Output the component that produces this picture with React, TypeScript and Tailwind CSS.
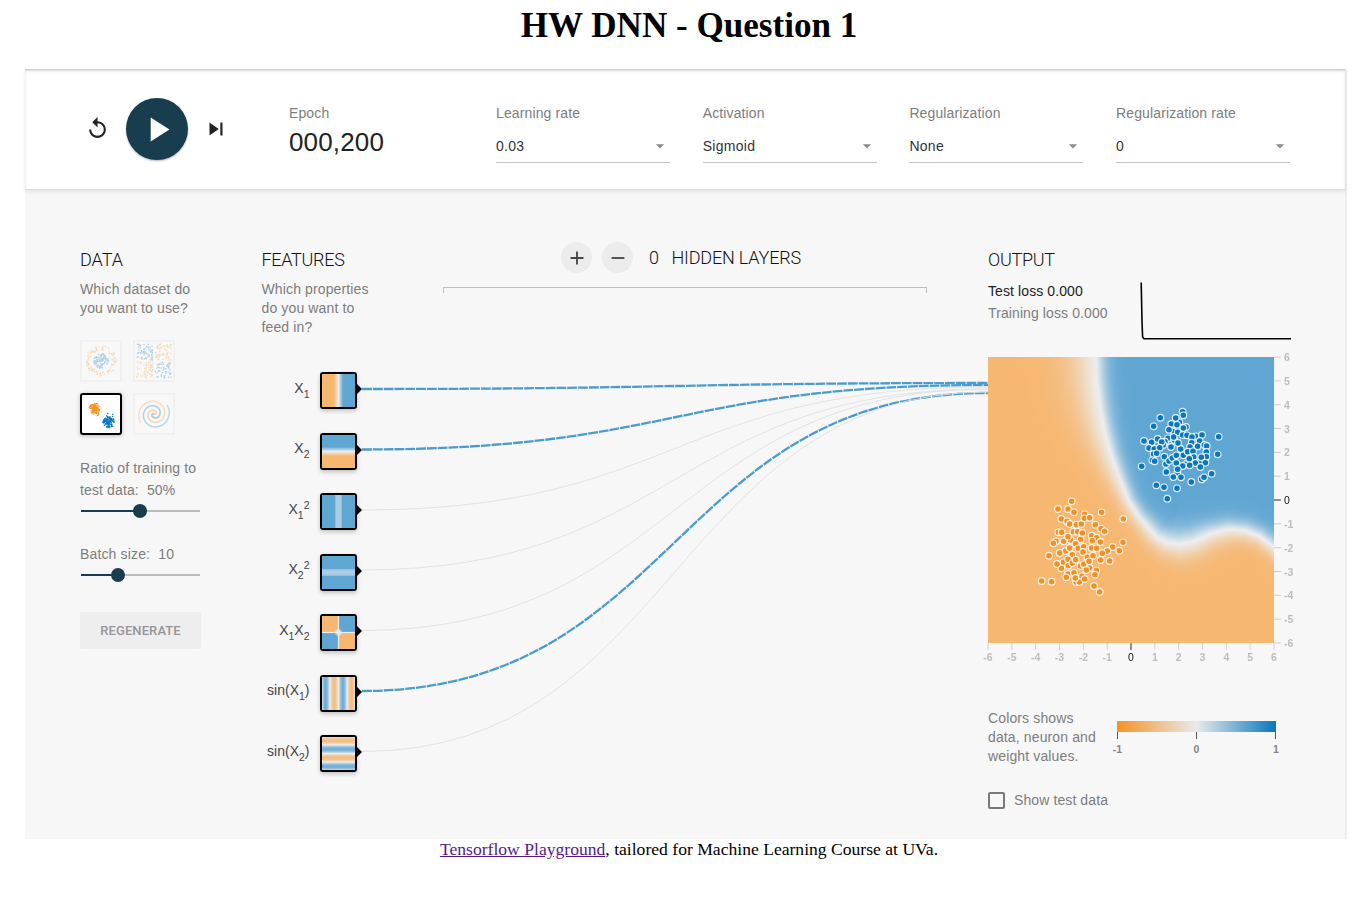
import React, { useLayoutEffect, useRef } from "react";
import {
  MdReplay,
  MdPlayArrow,
  MdSkipNext,
  MdArrowDropDown,
  MdAdd,
  MdRemove,
} from "react-icons/md";

type Field = (x: number, y: number) => number;

const ORANGE = [246, 183, 113];
const MID = [236, 237, 238];
const BLUE = [96, 166, 211];

function Heat({ field, size, className }: { field: Field; size: number; className: string }) {
  const ref = useRef<HTMLCanvasElement>(null);
  useLayoutEffect(() => {
    const ctx = ref.current?.getContext("2d");
    if (!ctx) return;
    const img = ctx.createImageData(size, size);
    for (let j = 0; j < size; j++) {
      for (let i = 0; i < size; i++) {
        const x = ((i + 0.5) / size) * 12 - 6;
        const y = 6 - ((j + 0.5) / size) * 12;
        const v = Math.max(-1, Math.min(1, field(x, y)));
        const end = v < 0 ? ORANGE : BLUE;
        const t = Math.abs(v);
        const k = (j * size + i) * 4;
        for (let c = 0; c < 3; c++) img.data[k + c] = MID[c] + (end[c] - MID[c]) * t;
        img.data[k + 3] = 255;
      }
    }
    ctx.putImageData(img, 0, 0);
  }, [field, size]);
  return <canvas ref={ref} width={size} height={size} className={className} />;
}

// Decision boundary: x, y, falloff on the negative side, falloff on the positive side
const BOUNDARY = [
  [-1.48, 7, 1.35, 0.55],
  [-1.48, 6, 1.3, 0.55],
  [-1.42, 5, 1.25, 0.55],
  [-1.31, 4, 1.15, 0.55],
  [-1.12, 3, 1.0, 0.53],
  [-0.86, 2, 0.8, 0.5],
  [-0.54, 1.1, 0.65, 0.47],
  [-0.1, 0, 0.5, 0.44],
  [0.32, -0.68, 0.47, 0.48],
  [1.05, -1.52, 0.55, 0.62],
  [1.5, -1.77, 0.66, 0.75],
  [2.05, -1.86, 0.76, 0.8],
  [2.6, -1.74, 0.76, 0.75],
  [3.3, -1.42, 0.68, 0.62],
  [4.1, -1.22, 0.62, 0.54],
  [4.8, -1.28, 0.55, 0.5],
  [5.4, -1.52, 0.48, 0.48],
  [6, -1.98, 0.45, 0.48],
  [6.6, -2.6, 0.45, 0.48],
];

const outputField: Field = (x, y) => {
  let best = Infinity;
  let value = 0;
  for (let i = 0; i < BOUNDARY.length - 1; i++) {
    const [ax, ay, an, ap] = BOUNDARY[i];
    const [bx, by, bn, bp] = BOUNDARY[i + 1];
    const dx = bx - ax;
    const dy = by - ay;
    const t = Math.max(0, Math.min(1, ((x - ax) * dx + (y - ay) * dy) / (dx * dx + dy * dy)));
    const ex = x - ax - t * dx;
    const ey = y - ay - t * dy;
    const d = Math.hypot(ex, ey);
    if (d < best) {
      best = d;
      const positive = dx * ey - dy * ex > 0;
      const w = positive ? ap + (bp - ap) * t : an + (bn - an) * t;
      value = (positive ? 1 : -1) * Math.tanh(Math.pow(d / w, 1.15));
    }
  }
  return value;
};

const BLUE_POINTS = "208,97 191,125 174,145 165,155 212,177 160,165 230,222 270,215 193,150 218,65 220,76 151,83 197,84 131,109 184,102 201,104 177,119 228,111 220,114 203,127 102,153 125,157 143,147 155,156 117,174 133,177 149,173 131,192 140,190 127,211 134,214 95,229 168,222 163,200 177,213 187,204 199,196 199,219 220,196 183,171 191,141 204,159 218,135 231,136 257,139 246,141 276,135 326,140 245,158 269,153 263,169 283,165 290,168 240,171 233,185 249,184 289,186 323,193 251,201 289,200 274,202 238,206 256,219 286,218 239,226 218,228 271,231 202,249 203,238 169,246 190,261 213,262 244,276 275,268 282,262 305,251 139,286 162,292 201,295 172,326";
const ORANGE_POINTS = "160,155 182,178 155,64 114,87 144,87 162,97 194,103 245,97 310,117 124,117 141,124 149,132 169,134 184,132 193,115 209,113 226,134 243,146 254,154 115,157 125,157 173,155 187,159 215,167 230,173 241,186 309,187 131,184 152,180 144,170 108,184 100,190 167,191 175,205 191,200 137,213 149,204 217,182 215,204 230,205 278,201 298,212 262,213 247,220 119,219 87,227 189,216 157,224 202,232 219,227 242,240 269,243 130,247 124,265 111,252 144,238 145,257 157,249 167,239 181,258 191,253 207,244 209,264 199,270 229,271 225,284 144,282 162,278 139,292 186,289 168,306 178,306 166,294 194,297 65,303 95,305 222,318 239,336";

function Points({ list, fill, transform }: { list: string; fill: string; transform: string }) {
  return (
    <g transform={transform} fill={fill} stroke="#fff" strokeOpacity={0.85} strokeWidth={3.4}>
      {list.split(" ").map((p) => {
        const [x, y] = p.split(",");
        return <circle key={p} cx={x} cy={y} r={10} />;
      })}
    </g>
  );
}

const TICKS = [-6, -5, -4, -3, -2, -1, 0, 1, 2, 3, 4, 5, 6];

function OutputPlot() {
  return (
    <div className="relative mt-[17px] h-[310px] w-[310px]">
      <Heat field={outputField} size={286} className="block h-[286px] w-[286px]" />
      <svg width="320" height="316" className="absolute left-0 top-0 overflow-visible">
        <Points list={BLUE_POINTS} fill="#0877bd" transform="translate(122 33) scale(.33333)" />
        <Points list={ORANGE_POINTS} fill="#ee9127" transform="translate(32 123) scale(.33333)" />
        {TICKS.map((t) => {
          const p = (t + 6) * 23.83;
          const zero = t === 0;
          return (
            <g
              key={t}
              fontFamily="Liberation Sans, sans-serif"
              fontSize={10.5}
              fontWeight={zero ? 400 : 700}
              fill={zero ? "#111" : "#bdbdbd"}
              stroke="none"
            >
              <line x1={p} x2={p} y1={286} y2={293} stroke={zero ? "#777" : "#cfcfcf"} strokeWidth={zero ? 1.6 : 1} />
              <text x={p} y={304} textAnchor="middle">{t}</text>
              <line x1={286} x2={293} y1={286 - p} y2={286 - p} stroke={zero ? "#777" : "#cfcfcf"} strokeWidth={zero ? 1.6 : 1} />
              <text x={296} y={290 - p}>{t}</text>
            </g>
          );
        })}
      </svg>
    </div>
  );
}

const Sub = ({ children }: { children: string }) => (
  <span className="relative top-[5px] text-[10.5px]">{children}</span>
);
const Sup = ({ children }: { children: string }) => (
  <span className="relative -top-[5px] text-[10.5px]">{children}</span>
);

const FEATURES: { label: React.ReactNode; field: Field; from: number; to: number; on: boolean }[] = [
  { label: <>X<Sub>1</Sub></>, field: (x) => x * 0.6, from: 389, to: 383, on: true },
  { label: <>X<Sub>2</Sub></>, field: (_x, y) => y * 0.6, from: 449.5, to: 385, on: true },
  { label: <>X<Sub>1</Sub><Sup>2</Sup></>, field: (x) => 0.45 + Math.pow(x / 1.4, 4) * 0.5, from: 510, to: 387, on: false },
  { label: <>X<Sub>2</Sub><Sup>2</Sup></>, field: (_x, y) => 0.45 + Math.pow(y / 1.4, 4) * 0.5, from: 570, to: 389, on: false },
  {
    label: <>X<Sub>1</Sub>X<Sub>2</Sub></>,
    field: (x, y) => Math.tanh(x * 4) * Math.tanh(y * 4) * Math.min(1, Math.pow(Math.hypot(x, y) / 1.5, 2)),
    from: 630.5,
    to: 389,
    on: false,
  },
  { label: <>sin(X<Sub>1</Sub>)</>, field: (x) => Math.sin(x) * 0.88, from: 691, to: 393, on: true },
  { label: <>sin(X<Sub>2</Sub>)</>, field: (_x, y) => Math.sin(y) * 0.88, from: 751.5, to: 392, on: false },
];

function Links() {
  return (
    <svg width="630" height="400" className="pointer-events-none absolute left-[337px] top-[301px] overflow-visible">
      <g transform="translate(-362 -370)" fill="none">
        {FEATURES.map((f) => (
          <path
            key={f.from}
            d={`M362,${f.from}C675,${f.from} 675,${f.to} 988,${f.to}`}
            stroke={f.on ? "#4b9bcc" : "#e0e0e0"}
            strokeWidth={f.on ? 2.3 : 0.9}
            strokeDasharray={f.on ? "9.8 1" : undefined}
          />
        ))}
      </g>
    </svg>
  );
}

function randomSource(seed: number) {
  let s = seed;
  return () => {
    s = (s * 16807) % 2147483647;
    return s / 2147483647;
  };
}

type Dot = [number, number, boolean];

function makeDots(kind: string): Dot[] {
  const r = randomSource(91);
  const dots: Dot[] = [];
  const norm = () => r() + r() + r() - 1.5;
  if (kind === "circle") {
    for (let i = 0; i < 95; i++) {
      const a = r() * 6.283;
      const d = Math.sqrt(r()) * 7.5;
      dots.push([21 + d * Math.cos(a), 21 + d * Math.sin(a), true]);
    }
    for (let i = 0; i < 95; i++) {
      const a = r() * 6.283;
      const d = 11 + r() * 4.5;
      dots.push([21 + d * Math.cos(a), 21 + d * Math.sin(a), false]);
    }
  } else if (kind === "xor") {
    // Blue fills the top-left and bottom-right quadrants
    for (let i = 0; i < 230; i++) {
      const x = r() * 32 - 16;
      const y = r() * 32 - 16;
      dots.push([21 + x + Math.sign(x), 21 + y + Math.sign(y), x * y > 0]);
    }
  } else if (kind === "gauss") {
    for (let i = 0; i < 110; i++) {
      dots.push([15 + norm() * 5, 15.6 + norm() * 5.6, false]);
      dots.push([28.5 + norm() * 5.4, 28.3 + norm() * 5.4, true]);
    }
  } else {
    for (let i = 0; i < 130; i++) {
      const d = (i / 130) * 16;
      const a = (i / 130) * 11 + 2.2;
      dots.push([21 + d * Math.cos(a), 21 - d * Math.sin(a), true]);
      dots.push([21 - d * Math.cos(a), 21 + d * Math.sin(a), false]);
    }
  }
  return dots;
}

function Dataset({ kind, active }: { kind: string; active?: boolean }) {
  return (
    <div
      className={
        active
          ? "h-[42px] w-[42px] overflow-hidden rounded-[3px] border-2 border-black bg-white shadow-[0_1px_4px_rgba(0,0,0,0.25)]"
          : "h-[42px] w-[42px] overflow-hidden border-2 border-[#f0f0f0] bg-[#f8f8f8]"
      }
    >
      <svg viewBox="2 2 38 38" className={active ? "h-[38px] w-[38px]" : "h-[38px] w-[38px] opacity-30"}>
        {makeDots(kind).map(([x, y, blue], i) => (
          <rect key={i} x={x - 0.6} y={y - 0.6} width={1.3} height={1.3} fill={blue ? "#0877bd" : "#f59322"} />
        ))}
      </svg>
    </div>
  );
}

function Select({ label, value }: { label: string; value: string }) {
  return (
    <div className="w-[174px]">
      <div className="text-[14px] leading-[20px] tracking-[0.12px] text-[#7d7d7d]">{label}</div>
      <div className="mt-[7px] flex h-[33px] items-center justify-between border-b border-[#c4c4c4]">
        <span className="pt-[1px] text-[14px] tracking-[0.3px] text-[#333]">{value}</span>
        <MdArrowDropDown className="h-[20px] w-[20px] text-[#8c8c8c]" />
      </div>
    </div>
  );
}

function Slider({ fill, knob }: { fill: string; knob: string }) {
  return (
    <div className="relative ml-[1px] h-[14px] w-[119px]">
      <div className="absolute top-[6px] h-[2px] w-full bg-[#bdbdbd]" />
      <div className={`absolute top-[6px] h-[2px] bg-[#183d4e] ${fill}`} />
      <div className={`absolute top-0 h-[14px] w-[14px] rounded-full bg-[#183d4e] ${knob}`} />
    </div>
  );
}

const HEADING = "font-['Roboto'] text-[18px] font-light leading-[22px] text-[#111]";
const BODY = "text-[14px] leading-[19px] tracking-[0.13px] text-[#7d7d7d]";

export default function App() {
  return (
    <div className="h-[903px] w-[1357px] overflow-hidden bg-white pl-[25px] font-['Liberation_Sans',sans-serif]">
      <h1 className="h-[69px] w-[1328px] pt-[5px] text-center font-['Liberation_Serif',serif] text-[35.1px] font-bold leading-[41px] text-black">
        HW DNN - Question 1
      </h1>
      <div className="relative h-[770px] w-[1322px] border-r-2 border-[#ededed] bg-[#f7f7f7]">
        <header className="relative flex h-[121px] items-start border-b border-[#dcdcdc] bg-white pl-[59px] pt-[29px] shadow-[0_2px_4px_rgba(0,0,0,0.08),inset_0_2px_3px_-1px_rgba(0,0,0,0.3)]">
          <MdReplay className="ml-[1px] mt-[18px] h-[25px] w-[25px] text-[#222]" />
          <div className="ml-[16px] flex h-[62px] w-[62px] items-center justify-center rounded-full bg-[#183d4e] shadow-[0_1px_2px_rgba(0,0,0,0.3)]">
            <MdPlayArrow className="h-[41px] w-[41px] text-white" />
          </div>
          <MdSkipNext className="ml-[15px] mt-[18px] h-[26px] w-[26px] text-[#222]" />
          <div className="ml-[60px] mt-[5px] w-[207px]">
            <div className="text-[14px] leading-[20px] tracking-[0.12px] text-[#7d7d7d]">Epoch</div>
            <div className="text-[26px] leading-[38px] tracking-[0.15px] text-[#222]">000,200</div>
          </div>
          <div className="mt-[5px] flex gap-[32.7px]">
            <Select label="Learning rate" value="0.03" />
            <Select label="Activation" value="Sigmoid" />
            <Select label="Regularization" value="None" />
            <Select label="Regularization rate" value="0" />
          </div>
        </header>

        <main className="flex items-start pl-[55px] pt-[59px]">
          <section className="w-[121px]">
            <h2 className={HEADING}>DATA</h2>
            <p className={`mt-[9px] whitespace-nowrap ${BODY}`}>
              Which dataset do
              <br />
              you want to use?
            </p>
            <div className="mt-[22px] grid w-[95px] grid-cols-2 gap-[11px]">
              <Dataset kind="circle" />
              <Dataset kind="xor" />
              <Dataset kind="gauss" active />
              <Dataset kind="spiral" />
            </div>
            <p className="mt-[22px] whitespace-nowrap text-[14px] leading-[22px] tracking-[0.13px] text-[#7d7d7d]">
              Ratio of training to
              <br />
              test data:&nbsp; 50%
            </p>
            <div className="mt-[2.5px]">
              <Slider fill="w-[59px]" knob="left-[52px]" />
            </div>
            <p className="mt-[25.5px] text-[14px] leading-[22px] tracking-[0.15px] text-[#7d7d7d]">Batch size:&nbsp; 10</p>
            <div className="mt-[2.5px]">
              <Slider fill="w-[37px]" knob="left-[30px]" />
            </div>
            <button className="mt-[30.5px] h-[37px] w-[121px] rounded-[2px] bg-[#eeeeee] pt-[1px] font-['Roboto'] text-[13px] font-medium tracking-[0.1px] text-[#969696]">
              REGENERATE
            </button>
          </section>

          <section className="ml-[60.5px] w-[121.5px]">
            <h2 className={`tracking-[-0.3px] ${HEADING}`}>FEATURES</h2>
            <p className={`mt-[9px] whitespace-nowrap ${BODY}`}>
              Which properties
              <br />
              do you want to
              <br />
              feed in?
            </p>
            <div className="mt-[35px] flex flex-col gap-[23.5px]">
              {FEATURES.map((f) => (
                <div key={f.from} className="flex h-[37px] w-[100px] items-center">
                  <div className="w-[48.5px] whitespace-nowrap pb-[5px] text-right text-[14px] leading-[20px] text-[#444]">
                    {f.label}
                  </div>
                  <div className="ml-[10px] h-[37px] w-[37px] shrink-0 overflow-hidden rounded-[3px] border-2 border-black shadow-[0_2px_4px_rgba(0,0,0,0.22)]">
                    <Heat field={f.field} size={33} className="block h-[33px] w-[33px]" />
                  </div>
                  <svg width="5" height="10" viewBox="0 0 5 10" className="mb-[3px] shrink-0">
                    <path d="M0 0L5 5L0 10Z" />
                  </svg>
                </div>
              ))}
            </div>
          </section>

          <section className="ml-[60px] -mt-[7px] w-[484px]">
            <div className="flex h-[31px] items-center pl-[118px]">
              <div className="flex h-[31px] w-[31px] items-center justify-center rounded-full bg-[#ececec]">
                <MdAdd className="h-[22px] w-[22px] text-[#444]" />
              </div>
              <div className="ml-[10px] flex h-[31px] w-[31px] items-center justify-center rounded-full bg-[#ececec]">
                <MdRemove className="h-[22px] w-[22px] text-[#444]" />
              </div>
              <span className={`ml-[16px] ${HEADING}`}>0</span>
              <span className={`ml-[12.5px] whitespace-nowrap tracking-[-0.17px] ${HEADING}`}>HIDDEN LAYERS</span>
            </div>
            <div className="mt-[14px] h-[6px] border-x border-t border-[#bdbdbd]" />
          </section>

          <section className="ml-[61px] w-[310px]">
            <h2 className={`tracking-[-0.3px] ${HEADING}`}>OUTPUT</h2>
            <div className="mt-[9px] flex h-[60px]">
              <div className="w-[152px] whitespace-nowrap text-[14px] leading-[22px] tracking-[0.1px]">
                <div className="text-[#222]">Test loss 0.000</div>
                <div className="text-[#7d7d7d]">Training loss 0.000</div>
              </div>
              <svg width="152" height="60" fill="none" stroke="#000" strokeWidth="1.6">
                <path d="M1.2 2.5L2 41L2.6 57L4 58.7H151" />
              </svg>
            </div>
            <OutputPlot />
            <div className="mt-[42px] flex">
              <p className={`w-[129px] whitespace-nowrap ${BODY}`}>
                Colors shows
                <br />
                data, neuron and
                <br />
                weight values.
              </p>
              <svg width="170" height="50" className="overflow-visible">
                <defs>
                  <linearGradient id="scale">
                    <stop offset="0" stopColor="#f59322" />
                    <stop offset=".5" stopColor="#e8eaeb" />
                    <stop offset="1" stopColor="#0877bd" />
                  </linearGradient>
                </defs>
                <rect x="0" y="12" width="159" height="11" fill="url(#scale)" />
                <path d="M.5 23V30M79.5 23V30M158.5 23V30" stroke="#555" />
                <g
                  fontFamily="Liberation Sans, sans-serif"
                  fontSize="10.5"
                  fontWeight="700"
                  fill="#858585"
                  textAnchor="middle"
                >
                  <text x="0.5" y="44">-1</text>
                  <text x="79.5" y="44">0</text>
                  <text x="159" y="44">1</text>
                </g>
              </svg>
            </div>
            <div className="mt-[24px] flex h-[20px] items-center">
              <div className="h-[17px] w-[17px] rounded-[2px] border-2 border-[#7a7a7a]" />
              <span className="ml-[9px] text-[14px] tracking-[0.1px] text-[#7d7d7d]">Show test data</span>
            </div>
          </section>
        </main>
        <Links />
      </div>
      <footer className="w-[1328px] text-center font-['Liberation_Serif',serif] text-[17.6px] leading-[21px] text-black">
        <a className="text-[#551a8b] underline">Tensorflow Playground</a>, tailored for Machine Learning Course at UVa.
      </footer>
    </div>
  );
}
